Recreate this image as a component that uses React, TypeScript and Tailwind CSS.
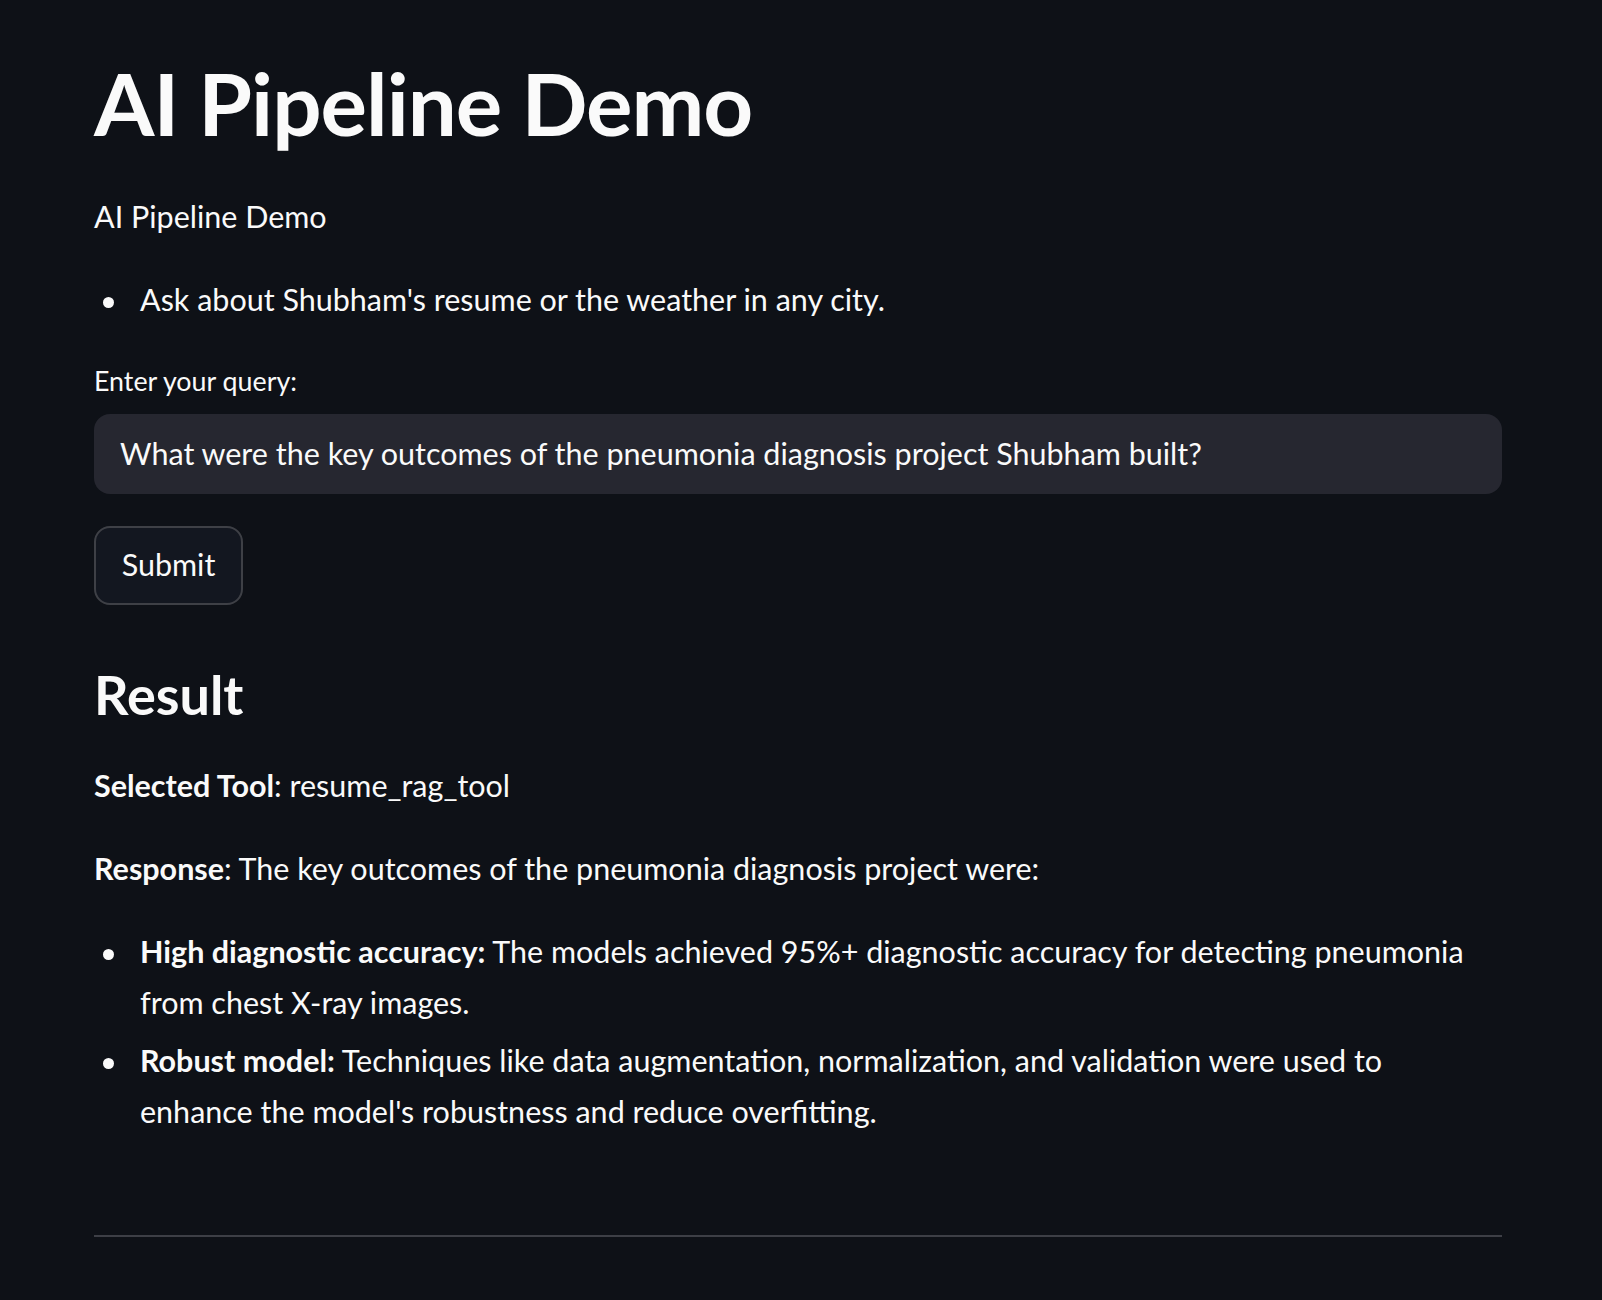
function Bullet({ children }: { children: React.ReactNode }) {
  return (
    <li className="flex">
      <span className="w-[46px] shrink-0 pl-[9px] pt-[23px]">
        <span className="block h-[11px] w-[11px] rounded-full bg-[#fafafa]" />
      </span>
      <span className="min-w-0">{children}</span>
    </li>
  );
}

export default function App() {
  return (
    <div
      className="min-h-[1300px] w-full bg-[#0e1117] text-[#fafafa]"
      style={{ fontFamily: "Lato, 'Open Sans', sans-serif" }}
    >
      <div className="w-[1408px] ml-[94px] pt-[51px]">
        <h1 className="text-[87px] leading-[1.2] font-bold tracking-[-1px]">
          AI Pipeline Demo
        </h1>

        <p className="mt-[36px] text-[30.5px] leading-[51.2px]">AI Pipeline Demo</p>

        <ul className="mt-[31px] text-[30.5px] leading-[51.2px]">
          <Bullet>Ask about Shubham's resume or the weather in any city.</Bullet>
        </ul>

        <label className="block mt-[34px] text-[26.8px] leading-[44.8px]">
          Enter your query:
        </label>
        <div className="mt-[10px] h-[80px] rounded-[16px] bg-[#262730] px-[26px] flex items-center text-[30.5px]">
          What were the key outcomes of the pneumonia diagnosis project Shubham built?
        </div>

        <button className="mt-[32px] h-[79px] w-[149px] rounded-[16px] border-2 border-[#3e4046] bg-[#131720] text-[30.5px] flex items-center justify-center">
          Submit
        </button>

        <h3 className="mt-[58px] text-[54px] leading-[1.2] font-bold">Result</h3>

        <p className="mt-[33px] text-[30.5px] leading-[51.2px]">
          <strong className="font-bold">Selected Tool</strong>: resume_rag_tool
        </p>

        <p className="mt-[31px] text-[30.5px] leading-[51.2px]">
          <strong className="font-bold">Response</strong>: The key outcomes of the pneumonia diagnosis project were:
        </p>

        <ul className="mt-[32px] flex flex-col gap-[6px] text-[30.5px] leading-[51.5px]">
          <Bullet>
            <strong className="font-bold">High diagnostic accuracy:</strong> The models achieved 95%+ diagnostic
            accuracy for detecting pneumonia from chest X-ray images.
          </Bullet>
          <Bullet>
            <strong className="font-bold">Robust model:</strong> Techniques like data augmentation, normalization, and
            validation were used to enhance the model's robustness and reduce overfitting.
          </Bullet>
        </ul>

        <hr className="mt-[97px] border-0 h-[2px] bg-[#3d3f46]" />
      </div>
    </div>
  );
}
